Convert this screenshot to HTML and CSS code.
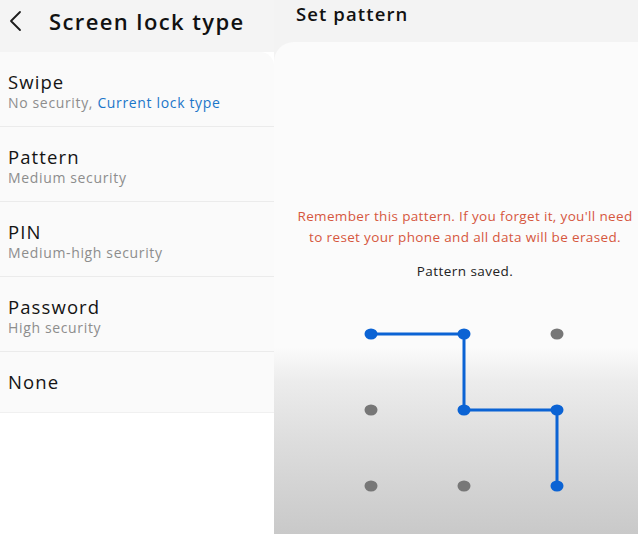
FILE: index.html
```html
<!DOCTYPE html>
<html lang="en">
<head>
<meta charset="utf-8">
<title>Screen lock type</title>
<link rel="stylesheet" href="styles.css">
</head>
<body>
<div class="screen">
  <section class="left">
    <header class="left-head">
      <svg class="back" width="16" height="22" viewBox="0 0 16 22"><path d="M12 2 L3 11 L12 20" fill="none" stroke="#1c1c1c" stroke-width="1.8" stroke-linecap="round" stroke-linejoin="round"/></svg>
      <h1 class="left-title">Screen lock type</h1>
    </header>
    <ul class="list">
      <li class="row">
        <div class="row-title">Swipe</div>
        <div class="row-sub">No security, <span class="current">Current lock type</span></div>
      </li>
      <li class="row">
        <div class="row-title">Pattern</div>
        <div class="row-sub">Medium security</div>
      </li>
      <li class="row">
        <div class="row-title">PIN</div>
        <div class="row-sub">Medium-high security</div>
      </li>
      <li class="row">
        <div class="row-title">Password</div>
        <div class="row-sub">High security</div>
      </li>
      <li class="row row-last">
        <div class="row-title">None</div>
      </li>
    </ul>
  </section>
  <section class="right">
    <header class="right-head">
      <h2 class="right-title">Set pattern</h2>
    </header>
    <div class="card">
      <p class="warning">Remember this pattern. If you forget it, you'll need<br>to reset your phone and all data will be erased.</p>
      <p class="saved">Pattern saved.</p>
      <svg class="pattern" width="346" height="200" viewBox="0 0 346 200">
        <polyline points="79,24 172,24 172,100 265,100 265,176" fill="none" stroke="#0b63d4" stroke-width="3"/>
        <ellipse cx="79" cy="24" rx="6.5" ry="5.5" fill="#0b63d4"/>
        <ellipse cx="172" cy="24" rx="6.5" ry="5.5" fill="#0b63d4"/>
        <ellipse cx="265" cy="24" rx="6.5" ry="5.5" fill="#777"/>
        <ellipse cx="79" cy="100" rx="6.5" ry="5.5" fill="#777"/>
        <ellipse cx="172" cy="100" rx="6.5" ry="5.5" fill="#0b63d4"/>
        <ellipse cx="265" cy="100" rx="6.5" ry="5.5" fill="#0b63d4"/>
        <ellipse cx="79" cy="176" rx="6.5" ry="5.5" fill="#777"/>
        <ellipse cx="172" cy="176" rx="6.5" ry="5.5" fill="#777"/>
        <ellipse cx="265" cy="176" rx="6.5" ry="5.5" fill="#0b63d4"/>
      </svg>
    </div>
  </section>
</div>
</body>
</html>
```
FILE: styles.css
```css
html, body {
  margin: 0;
  padding: 0;
  background: #ffffff;
}
body {
  font-family: "Open Sans", Roboto, "Liberation Sans", sans-serif;
  width: 638px;
  height: 534px;
  overflow: hidden;
}
.screen {
  display: flex;
  height: 534px;
  background: #f3f3f3;
}
.left {
  width: 274px;
  display: flex;
  flex-direction: column;
  background: #ffffff;
}
.left-head {
  height: 52px;
  background: #f4f4f4;
  display: flex;
  align-items: flex-start;
  padding: 0 0 0 8px;
  box-sizing: border-box;
}
.back {
  margin-top: 10px;
}
.left-title {
  margin: 6px 0 0 25px;
  font-size: 22px;
  line-height: 30px;
  font-weight: 600;
  color: #111;
  letter-spacing: 1.4px;
  white-space: nowrap;
}
.list {
  list-style: none;
  margin: 0;
  padding: 0;
  background: #fafafa;
  border-radius: 0 14px 0 0;
  border-bottom: 1px solid #f0f0f0;
}
.row {
  padding: 20px 8px 13px;
  border-bottom: 1px solid #ebebeb;
}
.row-last {
  padding-bottom: 20px;
  border-bottom: none;
}
.row-title {
  font-size: 18.5px;
  line-height: 20px;
  color: #141414;
  letter-spacing: 1.1px;
}
.row-sub {
  font-size: 14px;
  line-height: 21px;
  color: #8d8d8d;
  letter-spacing: 0.65px;
  white-space: nowrap;
}
.current {
  color: #1b76c9;
}
.right {
  flex: 1;
  display: flex;
  flex-direction: column;
  background: #f3f3f3;
}
.right-head {
  height: 42px;
  padding-left: 22px;
}
.right-title {
  margin: 0;
  padding-top: 1px;
  font-size: 18.5px;
  line-height: 26px;
  font-weight: 600;
  color: #111;
  letter-spacing: 1.1px;
}
.card {
  flex: 1;
  border-radius: 20px 0 0 0;
  background: linear-gradient(to bottom, #fbfbfb 0, #fbfbfb 305px, #ececec 340px, #dddddd 400px, #c9c9c9 100%);
  display: flex;
  flex-direction: column;
  align-items: center;
  padding: 164px 0 0 18px;
  box-sizing: border-box;
}
.warning {
  margin: 0;
  text-align: center;
  font-size: 13.5px;
  line-height: 21px;
  color: #d6573e;
  letter-spacing: 0.35px;
  white-space: nowrap;
}
.saved {
  margin: 14px 0 0;
  font-size: 13.5px;
  line-height: 18px;
  color: #222;
  letter-spacing: 0.45px;
}
.pattern {
  display: block;
  margin-top: 30px;
}
```
